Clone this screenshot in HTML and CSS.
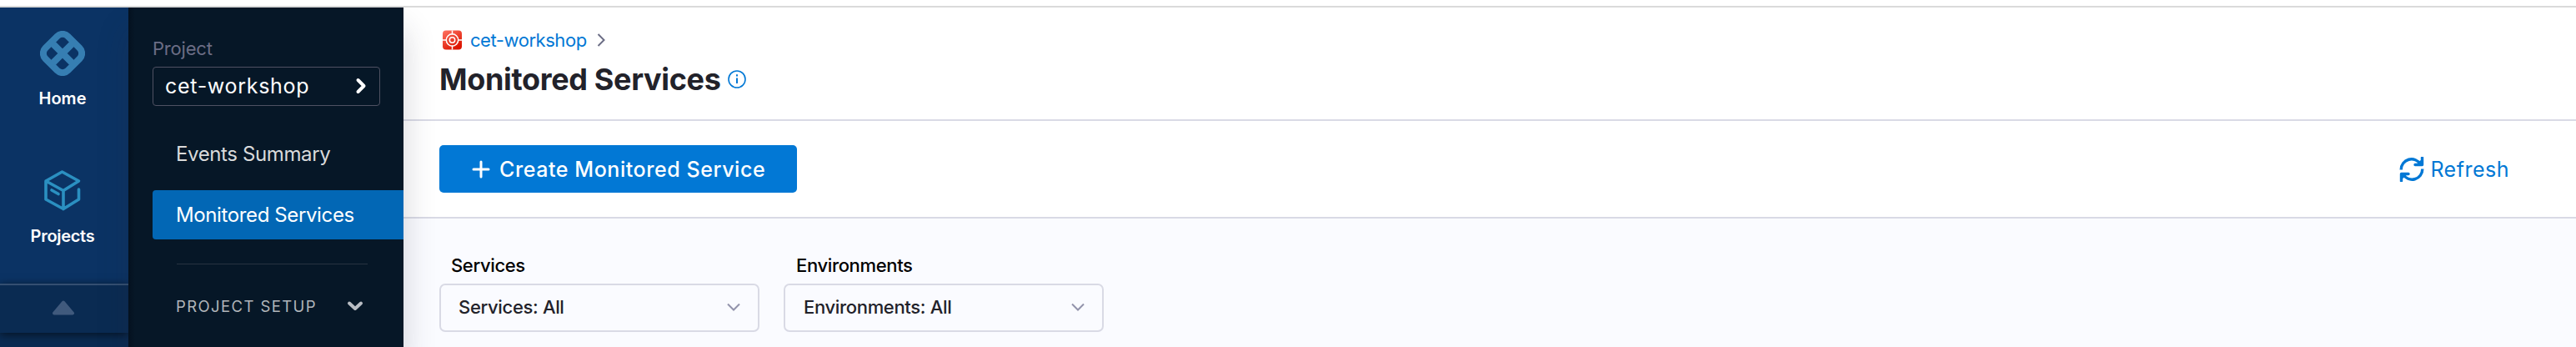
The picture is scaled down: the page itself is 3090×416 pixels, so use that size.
FILE: index.html
```html
<!DOCTYPE html>
<html lang="en">
<head>
<meta charset="utf-8">
<title>Monitored Services</title>
<link rel="stylesheet" href="styles.css">
</head>
<body>
<div class="app">
  <nav class="rail">
    <a class="rail-item home">
      <svg class="home-icon" width="54" height="54" viewBox="0 0 54 54" fill="none" stroke="#367eb2" stroke-width="8">
        <g transform="rotate(45 27 27)"><rect x="8" y="8" width="38" height="38" rx="9"/><path d="M27 8v38M8 27h38"/></g>
      </svg>
      <span>Home</span>
    </a>
    <a class="rail-item projects">
      <svg width="46" height="50" viewBox="0 0 46 50" fill="none" stroke="#2b90c1" stroke-width="3.6" stroke-linejoin="round" stroke-linecap="round">
        <path d="M3 14L22.500 3L42.500 14L24 25.500zM3 14V36L24 47.500V25.500M24 47.500L42.500 36V24"/><path d="M10 25l8 4.500"/>
      </svg>
      <span>Projects</span>
    </a>
    <div class="rail-toggle">
      <svg width="28" height="18" viewBox="0 0 28 18"><path d="M14 2.500L25 15.500H3z" fill="#405a7d" stroke="#405a7d" stroke-width="4" stroke-linejoin="round"/></svg>
    </div>
  </nav>
  <aside class="side">
    <div class="side-label"><span>Project</span></div>
    <div class="project-select"><span>cet-workshop</span>
      <svg width="14" height="20" viewBox="0 0 14 20" fill="none" stroke="#fff" stroke-width="4" stroke-linecap="round" stroke-linejoin="round"><path d="M3.500 3L10.500 10L3.500 17"/></svg>
    </div>
    <a class="side-link events"><span>Events Summary</span></a>
    <a class="side-link active"><span>Monitored Services</span></a>
    <hr class="side-rule">
    <div class="setup"><span>PROJECT SETUP</span>
      <svg width="20" height="14" viewBox="0 0 20 14" fill="none" stroke="#b8bdc3" stroke-width="4" stroke-linecap="round" stroke-linejoin="round"><path d="M3 3.500L10 10L17 3.500"/></svg>
    </div>
  </aside>
  <main class="main">
    <header class="head">
      <div class="crumbs">
        <svg width="23" height="24" viewBox="0 0 23 24">
          <defs><linearGradient id="red" x1="0" y1="0" x2=".6" y2="1"><stop offset="0" stop-color="#ff7464"/><stop offset="1" stop-color="#dc1500"/></linearGradient></defs>
          <rect y=".5" width="23" height="23" rx="4" fill="url(#red)"/>
          <g fill="none" stroke="#fff" stroke-width="1.500"><circle cx="11.500" cy="12" r="7.200"/><circle cx="11.500" cy="12" r="3.200"/><path d="M11.500 .5v5M11.500 18.500v5M0 12h5M18 12h5"/></g>
        </svg>
        <a>cet-workshop</a>
        <svg width="10" height="16" viewBox="0 0 10 16" fill="none" stroke="#6b6d85" stroke-width="2"><path d="M1.500 1L8.500 8L1.500 15"/></svg>
      </div>
      <div class="title-row">
        <h1>Monitored Services</h1>
        <svg width="22" height="22" viewBox="0 0 22 22"><circle cx="11" cy="11" r="10" fill="none" stroke="#0278d5" stroke-width="1.600"/><path d="M11 9.500v6.500M11 5.200v2.400" stroke="#0278d5" stroke-width="2"/></svg>
      </div>
    </header>
    <section class="toolbar">
      <button class="create">
        <svg width="22" height="22" viewBox="0 0 22 22" stroke="#fff" stroke-width="3" stroke-linecap="round"><path d="M11 2v18M2 11h18"/></svg>
        <span>Create Monitored Service</span>
      </button>
      <a class="refresh">
        <svg width="30" height="30" viewBox="0 0 30 30" fill="none" stroke="#0278d5" stroke-width="3.4"><path d="M2.200 15.500A12.500 12.500 0 0 1 25.500 9M27.800 14.500A12.500 12.500 0 0 1 4.500 21"/><path d="M27.500 1v8.500H19M2.500 29V20.500H11" stroke-linecap="round" stroke-linejoin="round"/><path d="M27 3v6h-7zM3 27v-6h7z" fill="#0278d5" stroke="none"/></svg>
        <span>Refresh</span>
      </a>
    </section>
    <section class="filters">
      <div class="field"><label class="lab-services"><span>Services</span></label>
        <div class="select"><span class="val-services">Services: All</span><svg width="16" height="10" viewBox="0 0 16 10" fill="none" stroke="#9293ab" stroke-width="2"><path d="M1 1.500L8 8.500L15 1.500"/></svg></div>
      </div>
      <div class="field"><label class="lab-env"><span>Environments</span></label>
        <div class="select"><span class="val-env">Environments: All</span><svg width="16" height="10" viewBox="0 0 16 10" fill="none" stroke="#9293ab" stroke-width="2"><path d="M1 1.500L8 8.500L15 1.500"/></svg></div>
      </div>
    </section>
  </main>
</div>
</body>
</html>
```
FILE: styles.css
```css
* { box-sizing: border-box; }
body { margin: 0; padding-top: 7px; height: 416px; overflow: hidden; background: #fff; font-family: Inter, "Liberation Sans", sans-serif; }
svg { display: block; flex: none; }
span, a, h1 { white-space: nowrap; }
.app { display: flex; height: 409px; border-top: 2px solid #dadada; overflow: hidden; }
.rail { width: 154px; flex: none; background: #0b3364; display: flex; flex-direction: column; overflow: hidden; }
.rail-item { flex: none; display: flex; flex-direction: column; align-items: center; padding-right: 4px; color: #fff; font-size: 20px; font-weight: 600; line-height: 24px; }
.home { padding-top: 28px; height: 171px; gap: 15px; }
.projects { padding-top: 23px; height: 160px; gap: 18px; letter-spacing: -.3px; }
.rail-toggle { height: 59px; flex: none; border-top: 2px solid #344f71; background: #0a2b52; display: flex; justify-content: center; padding: 18px 3px 0 0; box-shadow: 0 2px 10px rgba(0,0,0,.6); position: relative; }
.rail::after { content: ""; flex: none; height: 30px; background: #0a2b52; }
.side { width: 330px; flex: none; background: linear-gradient(90deg, #04111f, #061727 8px); padding: 34px 0 0 29px; z-index: 1; position: relative; box-shadow: 0 26px 36px rgba(40,41,61,.2); }
.side::after { content: ""; display: block; height: 120px; }
.side-label { color: #6b6d85; font-size: 22px; line-height: 30px; height: 37px; letter-spacing: -.2px; }
.project-select { width: 273px; height: 47px; border: 1.5px solid #4f5162; border-radius: 4px; color: #fff; display: flex; align-items: center; justify-content: space-between; padding: 0 15px 1px 14px; font-size: 25px; letter-spacing: .7px; }
.side-link { display: flex; align-items: center; height: 59px; padding-left: 28px; font-size: 24px; letter-spacing: -.38px; color: #d9dadb; }
.events { margin-top: 28px; }
.active { margin-top: 14px; background: #0267b5; color: #fff; border-radius: 4px 0 0 4px; }
.side-rule { width: 229px; height: 1px; border: 0; background: #273341; margin: 29px 0 0 29px; }
.setup { display: flex; align-items: center; justify-content: space-between; width: 253px; margin-top: 34px; height: 32px; padding-left: 28px; color: #b0b5ba; font-size: 18.5px; letter-spacing: 1.4px; }
.main { flex: 1; background: #fafbff; }
.head { height: 136px; background: #fff; border-bottom: 2px solid #d9dae5; padding: 23px 0 0 43px; }
.crumbs { display: flex; align-items: center; height: 32px; padding-left: 4px; font-size: 22px; letter-spacing: -.45px; color: #0278d5; }
.crumbs a { margin: -1px 12px 0 10px; }
.title-row { display: flex; align-items: center; height: 44px; margin-top: 9px; gap: 8px; }
h1 { margin: 0; font-size: 36px; font-weight: 700; letter-spacing: -.33px; color: #22222a; line-height: 44px; }
.toolbar { height: 117px; background: #fff; border-bottom: 2px solid #d9dae5; display: flex; align-items: flex-start; justify-content: space-between; padding: 29px 80px 0 43px; }
.create { width: 429px; height: 57px; border: 0; border-radius: 5px; background: #0278d5; color: #fff; font: 500 25px Inter, sans-serif; letter-spacing: .57px; display: flex; align-items: center; padding: 0 0 0 39px; gap: 11px; }
.refresh { height: 57px; display: flex; align-items: center; gap: 7px; color: #0278d5; font-size: 25px; letter-spacing: .5px; }
.filters { padding: 42px 0 0 43px; display: flex; gap: 29px; }
.field { width: 384px; }
label { display: block; height: 36px; line-height: 28px; padding-left: 15px; font-size: 22px; font-weight: 500; letter-spacing: -.35px; color: #000; }
.lab-services { padding-left: 14px; }
.select { height: 58px; border: 2px solid #d9dae5; border-radius: 7px; display: flex; align-items: center; justify-content: space-between; padding: 0 21px 3px 22px; font-size: 22px; font-weight: 500; letter-spacing: -.33px; color: #22222a; }
.val-services { margin-left: -1px; }
```
